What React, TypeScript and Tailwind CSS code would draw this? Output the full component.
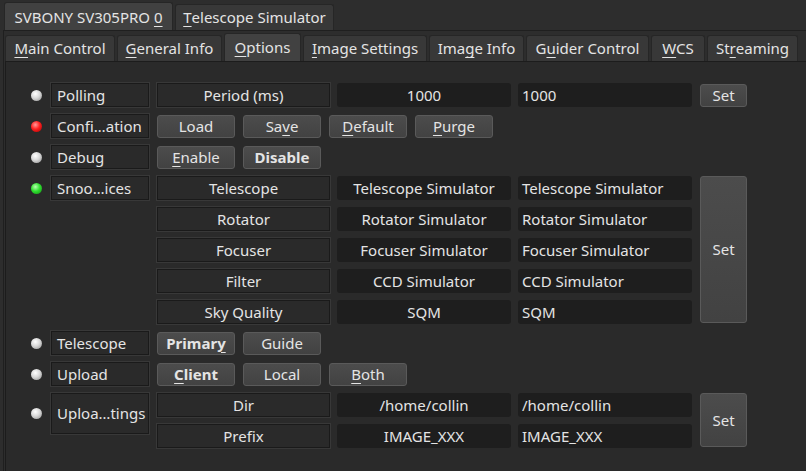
import React from 'react';

type LedColor = 'grey' | 'red' | 'green';

const Mn: React.FC<{ text: string; at: number }> = ({ text, at }) => (
  <>
    {text.slice(0, at)}
    <span className="underline underline-offset-[3px] decoration-1">{text[at]}</span>
    {text.slice(at + 1)}
  </>
);

const Led: React.FC<{ color: LedColor }> = ({ color }) => {
  const bg =
    color === 'red'
      ? 'bg-[radial-gradient(circle_at_40%_35%,#ff9a9a_0%,#ff2020_45%,#9a0000_100%)]'
      : color === 'green'
      ? 'bg-[radial-gradient(circle_at_40%_35%,#b8ffb0_0%,#30e030_45%,#128a12_100%)]'
      : 'bg-[radial-gradient(circle_at_40%_35%,#ffffff_0%,#d8d8d8_45%,#8a8a8a_100%)]';
  return (
    <div className="w-[20px] flex justify-center">
      <div className={`w-[11px] h-[11px] rounded-full ${bg}`} />
    </div>
  );
};

const Label: React.FC<{ children: React.ReactNode; className?: string }> = ({ children, className = '' }) => (
  <div
    className={`w-[98px] h-[24px] flex items-center pl-[5px] border border-[#1a1a1a] shadow-[0_0_0_1px_#383838] whitespace-nowrap ${className}`}
  >
    {children}
  </div>
);

const Prop: React.FC<{ children: React.ReactNode }> = ({ children }) => (
  <div className="w-[173px] h-[24px] flex items-center justify-center border border-[#1a1a1a] shadow-[0_0_0_1px_#383838]">
    {children}
  </div>
);

const Field: React.FC<{ children: React.ReactNode; center?: boolean }> = ({ children, center }) => (
  <div
    className={`w-[174px] h-[24px] flex items-center rounded-[3px] bg-[#1e1e1e] ${center ? 'justify-center' : 'pl-[4px]'}`}
  >
    {children}
  </div>
);

const Btn: React.FC<{ children: React.ReactNode; bold?: boolean; className?: string }> = ({
  children,
  bold,
  className = '',
}) => (
  <div
    className={`h-[23px] flex items-center justify-center rounded-[3px] border border-[#5a5a5a] bg-[linear-gradient(#4c4c4c,#424242)] ${
      bold ? 'font-bold' : ''
    } ${className}`}
  >
    {children}
  </div>
);

const Tab: React.FC<{ children: React.ReactNode; active?: boolean; w: number }> = ({ children, active, w }) => (
  <div
    style={{ width: w }}
    className={`flex items-center justify-center rounded-t-[3px] border border-b-0 border-[#262626] ${
      active ? 'h-[28px] bg-[#414141]' : 'h-[26px] bg-[#383838]'
    }`}
  >
    {children}
  </div>
);

const snoops = [
  ['Telescope', 'Telescope Simulator'],
  ['Rotator', 'Rotator Simulator'],
  ['Focuser', 'Focuser Simulator'],
  ['Filter', 'CCD Simulator'],
  ['Sky Quality', 'SQM'],
];

export default function App() {
  return (
    <div
      className="w-[806px] h-[471px] overflow-hidden bg-[#2d2d2d] text-[#e4e4e4] text-[15px]"
      style={{ fontFamily: '"Noto Sans", "Open Sans", sans-serif' }}
    >
      {/* Device tabs */}
      <div className="flex items-end gap-[2px] pl-[4px] pt-[4px] h-[30px]">
        <Tab w={169} active>
          <span className="pt-[1px]">SVBONY SV305PRO <Mn text="0" at={0} /></span>
        </Tab>
        <Tab w={159}>
          <Mn text="Telescope Simulator" at={0} />
        </Tab>
      </div>

      {/* Device pane */}
      <div className="ml-[3px] border-l border-t border-[#1f1f1f] bg-[#2d2d2d] h-[441px]">
        <div className="flex items-end gap-[2px] pl-[1px] h-[30px]">
          <Tab w={110}>
            <Mn text="Main Control" at={0} />
          </Tab>
          <Tab w={105}>
            <Mn text="General Info" at={0} />
          </Tab>
          <Tab w={77} active>
            <Mn text="Options" at={0} />
          </Tab>
          <Tab w={124}>
            <Mn text="Image Settings" at={0} />
          </Tab>
          <Tab w={95}>
            <Mn text="Image Info" at={3} />
          </Tab>
          <Tab w={123}>
            <Mn text="Guider Control" at={1} />
          </Tab>
          <Tab w={54}>
            <Mn text="WCS" at={0} />
          </Tab>
          <Tab w={91}>
            <Mn text="Streaming" at={2} />
          </Tab>
        </div>

        {/* Options page */}
        <div className="ml-[1px] border-l border-t border-[#1c1c1c] bg-[#2a2a2a] h-[411px] pt-[21px] pl-[20px] flex flex-col gap-[7px]">
          {/* Polling */}
          <div className="flex items-center">
            <Led color="grey" />
            <Label className="ml-[5px]">Polling</Label>
            <div className="ml-[8px]">
              <Prop>Period (ms)</Prop>
            </div>
            <div className="ml-[7px]">
              <Field center>1000</Field>
            </div>
            <div className="ml-[7px]">
              <Field>1000</Field>
            </div>
            <Btn className="ml-[8px] w-[47px]">Set</Btn>
          </div>

          {/* Configuration */}
          <div className="flex items-center">
            <Led color="red" />
            <Label className="ml-[5px]">Confi…ation</Label>
            <div className="ml-[8px] flex gap-[8px]">
              <Btn className="w-[78px]">Load</Btn>
              <Btn className="w-[78px]">
                <Mn text="Save" at={2} />
              </Btn>
              <Btn className="w-[78px]">
                <Mn text="Default" at={0} />
              </Btn>
              <Btn className="w-[78px]">
                <Mn text="Purge" at={0} />
              </Btn>
            </div>
          </div>

          {/* Debug */}
          <div className="flex items-center">
            <Led color="grey" />
            <Label className="ml-[5px]">Debug</Label>
            <div className="ml-[8px] flex gap-[8px]">
              <Btn className="w-[78px]">
                <Mn text="Enable" at={0} />
              </Btn>
              <Btn className="w-[78px]" bold>
                Disable
              </Btn>
            </div>
          </div>

          {/* Snoop devices */}
          <div className="flex items-start">
            <div className="flex items-center h-[24px]">
              <Led color="green" />
              <Label className="ml-[5px]">Snoo…ices</Label>
            </div>
            <div className="ml-[8px] flex flex-col gap-[7px]">
              {snoops.map(([name, dev]) => (
                <div key={name} className="flex gap-[7px]">
                  <Prop>{name}</Prop>
                  <Field center>{dev}</Field>
                  <Field>{dev}</Field>
                </div>
              ))}
            </div>
            <Btn className="ml-[8px] w-[47px] !h-[147px]">Set</Btn>
          </div>

          {/* Telescope */}
          <div className="flex items-center">
            <Led color="grey" />
            <Label className="ml-[5px]">Telescope</Label>
            <div className="ml-[8px] flex gap-[8px]">
              <Btn className="w-[78px]" bold>
                <Mn text="Primary" at={6} />
              </Btn>
              <Btn className="w-[78px]">Guide</Btn>
            </div>
          </div>

          {/* Upload */}
          <div className="flex items-center">
            <Led color="grey" />
            <Label className="ml-[5px]">Upload</Label>
            <div className="ml-[8px] flex gap-[8px]">
              <Btn className="w-[78px]" bold>
                <Mn text="Client" at={0} />
              </Btn>
              <Btn className="w-[78px]">Local</Btn>
              <Btn className="w-[78px]">
                <Mn text="Both" at={0} />
              </Btn>
            </div>
          </div>

          {/* Upload settings */}
          <div className="flex items-start">
            <div className="flex items-center">
              <Led color="grey" />
              <Label className="ml-[5px] !h-[41px]">Uploa…tings</Label>
            </div>
            <div className="ml-[8px] flex flex-col gap-[7px]">
              <div className="flex gap-[7px]">
                <Prop>Dir</Prop>
                <Field center>/home/collin</Field>
                <Field>/home/collin</Field>
              </div>
              <div className="flex gap-[7px]">
                <Prop>Prefix</Prop>
                <Field center>IMAGE_XXX</Field>
                <Field>IMAGE_XXX</Field>
              </div>
            </div>
            <Btn className="ml-[8px] w-[47px] !h-[54px]">Set</Btn>
          </div>
        </div>
      </div>
    </div>
  );
}
